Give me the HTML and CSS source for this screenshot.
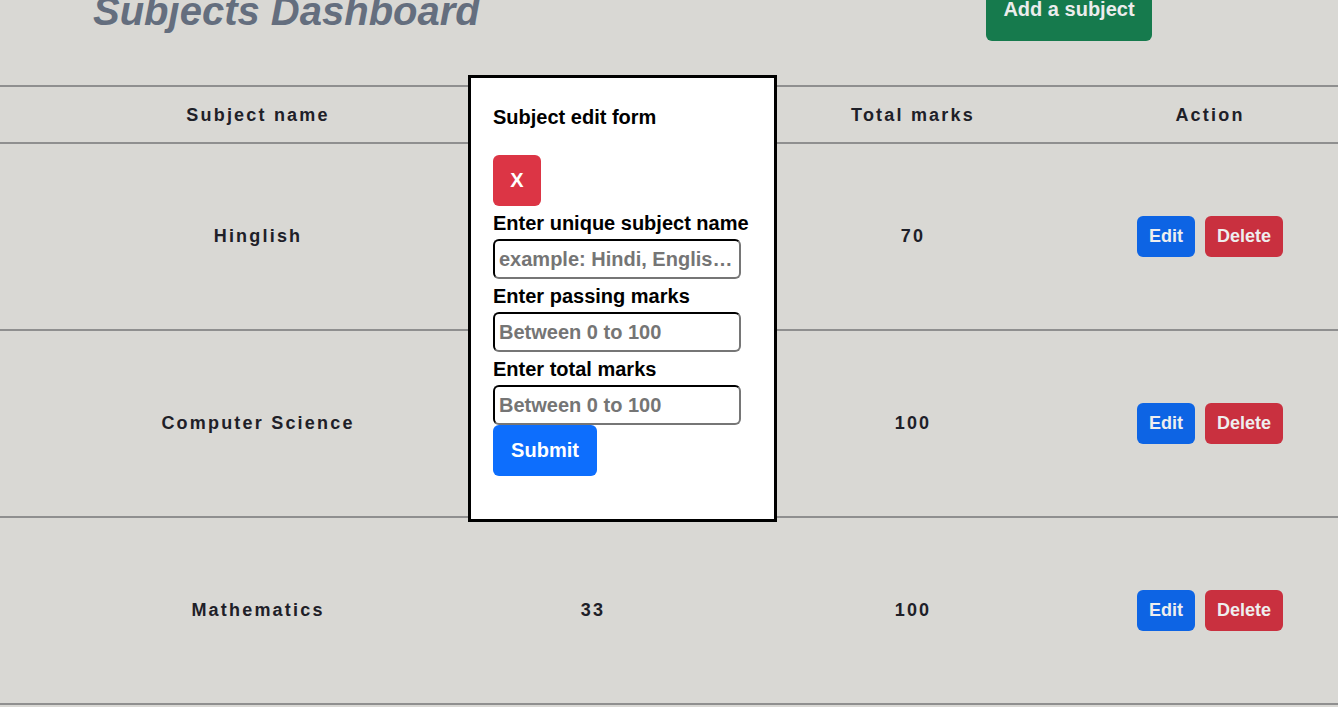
FILE: index.html
```html
<!DOCTYPE html>
<html lang="en">
<head>
<meta charset="utf-8">
<title>Subjects Dashboard</title>
<link rel="stylesheet" href="styles.css">
</head>
<body>
<div class="page">
  <header class="top">
    <h1 class="title">Subjects Dashboard</h1>
    <button class="btn btn-add">Add a subject</button>
  </header>

  <div class="table">
    <div class="row head">
      <div class="cell">Subject name</div>
      <div class="cell">Passing marks</div>
      <div class="cell">Total marks</div>
      <div class="cell action">Action</div>
    </div>
    <div class="row body">
      <div class="cell">Hinglish</div>
      <div class="cell">33</div>
      <div class="cell">70</div>
      <div class="cell action"><button class="btn btn-edit">Edit</button><button class="btn btn-del">Delete</button></div>
    </div>
    <div class="row body">
      <div class="cell">Computer Science</div>
      <div class="cell">40</div>
      <div class="cell">100</div>
      <div class="cell action"><button class="btn btn-edit">Edit</button><button class="btn btn-del">Delete</button></div>
    </div>
    <div class="row body">
      <div class="cell">Mathematics</div>
      <div class="cell">33</div>
      <div class="cell">100</div>
      <div class="cell action"><button class="btn btn-edit">Edit</button><button class="btn btn-del">Delete</button></div>
    </div>
  </div>

  <div class="modal">
    <h2 class="modal-title">Subject edit form</h2>
    <button class="btn btn-close">X</button>
    <label class="lbl">Enter unique subject name</label>
    <input class="inp" type="text" placeholder="example: Hindi, English, Maths">
    <label class="lbl">Enter passing marks</label>
    <input class="inp" type="text" placeholder="Between 0 to 100">
    <label class="lbl">Enter total marks</label>
    <input class="inp" type="text" placeholder="Between 0 to 100">
    <button class="btn btn-submit">Submit</button>
  </div>
</div>
</body>
</html>
```

FILE: styles.css
```css
* { box-sizing: border-box; }

html, body {
  margin: 0;
  padding: 0;
  background: #d9d8d4;
  overflow: hidden;
}

body {
  font-family: "Liberation Sans", Arial, sans-serif;
  color: #1e2028;
}

.page {
  position: relative;
  display: flow-root;
  width: 1338px;
  height: 707px;
}

.top {
  display: flex;
  justify-content: space-between;
  align-items: flex-start;
  padding: 0 186px 0 93px;
  margin-top: -16px;
  height: 57px;
}

.title {
  margin: 3px 0 0;
  font-size: 40px;
  line-height: 48px;
  font-weight: 700;
  font-style: italic;
  color: #646e7e;
  white-space: nowrap;
}

.btn {
  font-family: "Liberation Sans", Arial, sans-serif;
  font-weight: 700;
  border: none;
  border-radius: 6px;
  cursor: pointer;
  white-space: nowrap;
}

.btn-add {
  background: #167a4d;
  color: #ececec;
  font-size: 20px;
  line-height: 23px;
  padding: 14px 0 20px;
  width: 166px;
}

.table {
  margin-top: 44px;
  border-top: 2px solid #8f8f8f;
}

.row {
  display: grid;
  grid-template-columns: 516px 154px 486px 182px;
  border-bottom: 2px solid #8f8f8f;
  align-items: center;
}

.row.head { height: 57px; padding-top: 1px; }
.row.body { height: 187px; }

.cell {
  text-align: center;
  font-weight: 700;
  font-size: 18px;
  letter-spacing: 2.2px;
  color: #1e2028;
}

.cell.action {
  padding-right: 74px;
  display: flex;
  justify-content: center;
  gap: 10px;
}

.head .cell.action { display: block; }

.btn-edit, .btn-del {
  font-size: 18px;
  line-height: 21px;
  padding: 10px 12px;
  color: #eeeeee;
  letter-spacing: 0;
}

.btn-edit { background: #0d64e4; }
.btn-del { background: #c9303f; }

.modal {
  position: absolute;
  left: 468px;
  top: 75px;
  width: 309px;
  height: 447px;
  background: #fff;
  border: 3px solid #000;
  padding: 28px 22px 0;
  display: flex;
  flex-direction: column;
  align-items: flex-start;
  color: #000;
}

.modal-title {
  margin: 0;
  font-size: 20px;
  line-height: 23px;
  font-weight: 700;
}

.btn-close {
  margin-top: 26px;
  background: #dc3545;
  color: #fff;
  font-size: 20px;
  line-height: 23px;
  width: 48px;
  height: 51px;
  padding: 0;
}

.lbl {
  display: block;
  margin-top: 5px;
  font-size: 20px;
  line-height: 24px;
  font-weight: 700;
}

.inp {
  margin-top: 4px;
  width: 248px;
  height: 40px;
  border: 2px inset #767676;
  border-top-color: #1a1a1a;
  border-left-color: #1a1a1a;
  border-right-color: #767676;
  border-bottom-color: #767676;
  border-radius: 6px;
  padding: 0 4px;
  font-family: "Liberation Sans", Arial, sans-serif;
  font-size: 20px;
  font-weight: 700;
  text-overflow: ellipsis;
  background: #fff;
}

.inp::placeholder {
  color: #757575;
  opacity: 1;
}

.btn-submit {
  margin-top: 0;
  background: #0d6efd;
  color: #fff;
  font-size: 20px;
  line-height: 23px;
  padding: 14px 18px;
  width: 104px;
}
```
